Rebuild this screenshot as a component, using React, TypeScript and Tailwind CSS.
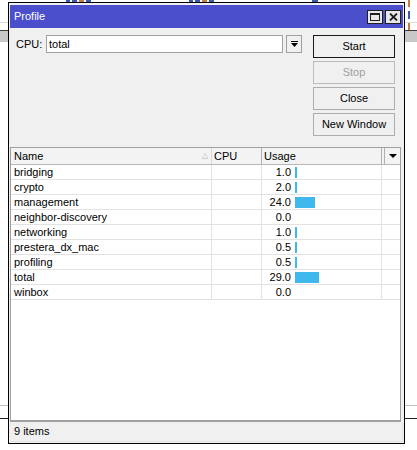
import React from "react";

const rows: { name: string; usage: number }[] = [
  { name: "bridging", usage: 1.0 },
  { name: "crypto", usage: 2.0 },
  { name: "management", usage: 24.0 },
  { name: "neighbor-discovery", usage: 0.0 },
  { name: "networking", usage: 1.0 },
  { name: "prestera_dx_mac", usage: 0.5 },
  { name: "profiling", usage: 0.5 },
  { name: "total", usage: 29.0 },
  { name: "winbox", usage: 0.0 },
];

const font = { fontFamily: '"Liberation Sans", Arial, sans-serif' };

function Btn({ label, primary, disabled }: { label: string; primary?: boolean; disabled?: boolean }) {
  return (
    <div
      className={
        "h-[23px] w-[82px] flex items-center justify-center text-[11px] bg-[#f0f0f0] border " +
        (primary ? "border-[#1a1a1a] text-black" : disabled ? "border-[#bcbcbc] text-[#a0a0a0]" : "border-[#adadad] text-black")
      }
    >
      {label}
    </div>
  );
}

function Frag() {
  return (
    <div className="flex gap-[2px]">
      <div className="w-[4px] h-[2px] bg-[#3a5ab0]" />
      <div className="w-[5px] h-[2px] bg-[#3a5ab0]" />
      <div className="w-[5px] h-[2px] bg-[#c08040]" />
      <div className="w-[5px] h-[2px] bg-[#3a5ab0]" />
    </div>
  );
}

export default function App() {
  return (
    <div className="relative w-[417px] h-[450px] bg-white overflow-hidden" style={font}>
      {/* background window behind */}
      <div className="absolute left-[66px] top-0 flex gap-[98px]">
        <Frag />
        <Frag />
        <div className="w-[6px] h-[2px] bg-[#3a5ab0]" />
      </div>
      <div className="absolute left-[407px] top-0 flex flex-col gap-[4px]">
        <div className="w-[3px] h-[7px] border-r-2 border-[#c08040]" />
        <div className="w-[3px] h-[8px] border-r-2 border-[#3a5ab0]" />
        <div className="w-[3px] h-[8px] border-r-2 border-[#c08040]" />
      </div>
      <div className="absolute left-0 top-[22px] w-full h-px bg-[#dcdcdc]" />
      <div className="absolute left-0 top-[30px] w-full h-[12px] bg-[#c8c8c8] border-t border-[#3c3c3c]" />
      <div className="absolute left-0 top-[405px] w-full h-px bg-[#c0c0c0]" />
      <div className="absolute left-0 top-[418px] w-full h-px bg-[#202020]" />

      {/* Profile window */}
      <div className="absolute left-[8px] top-[2px] w-[397px] h-[442px] border border-black bg-[#f0f0f0] p-px flex flex-col">
        {/* title bar */}
        <div className="mt-px h-[23px] bg-[#4b4fcb] flex items-center pl-[4px] pr-[2px]">
          <span className="text-white text-[11px] flex-1">Profile</span>
          <div className="flex gap-[2px]">
            <div className="w-[16px] h-[14px] bg-[#e8e8e8] border border-[#202020] flex items-center justify-center">
              <div className="w-[10px] h-[8px] border border-[#202020] border-t-2" />
            </div>
            <div className="w-[16px] h-[14px] bg-[#e8e8e8] border border-[#202020] flex items-center justify-center">
              <svg width="9" height="8" viewBox="0 0 9 8">
                <path d="M1 0.5 L8 7.5 M8 0.5 L1 7.5" stroke="#202020" strokeWidth="1.8" />
              </svg>
            </div>
          </div>
        </div>

        {/* top section */}
        <div className="flex pt-[7px] pr-[8px]">
          <div className="flex-1 flex items-start pl-[6px]">
            <span className="text-[11px] text-black h-[18px] leading-[18px] w-[30px]">CPU:</span>
            <div className="w-[237px] h-[18px] bg-white border border-[#a0a0a0] text-[11px] text-black leading-[16px] pl-[2px]">
              total
            </div>
            <div className="ml-[3px] w-[16px] h-[18px] bg-[#f0f0f0] border border-[#a0a0a0] flex items-center justify-center">
              <svg width="7" height="7" viewBox="0 0 7 7">
                <rect x="0" y="0" width="7" height="1" fill="#000" />
                <path d="M0 2 L7 2 L3.5 6 Z" fill="#000" />
              </svg>
            </div>
          </div>
          <div className="flex flex-col gap-[3px]">
            <Btn label="Start" primary />
            <Btn label="Stop" disabled />
            <Btn label="Close" />
            <Btn label="New Window" />
          </div>
        </div>

        {/* table */}
        <div className="mt-[11px] mr-[2px] flex-1 bg-white border border-[#a0a0a0] border-b-2 flex flex-col overflow-hidden">
          <div className="flex h-[17px] bg-[#f3f3f3] border-b border-[#b8b8b8] text-[11px] text-black leading-[16px]">
            <div className="w-[201px] pl-[3px] relative border-r border-[#d8d8d8]">
              Name
              <span className="absolute right-[3px] top-[0px] text-[8px] text-[#b8b8b8]">△</span>
            </div>
            <div className="w-[50px] pl-[2px] border-r border-[#b0b0b0]">CPU</div>
            <div className="w-[120px] pl-[2px] border-r border-[#b0b0b0]">Usage</div>
            <div className="w-[3px] border-r border-[#b0b0b0]" />
            <div className="flex-1 flex items-center justify-center">
              <svg width="8" height="4" viewBox="0 0 8 4">
                <path d="M0 0 L8 0 L4 4 Z" fill="#000" />
              </svg>
            </div>
          </div>
          {rows.map((r) => (
            <div key={r.name} className="flex h-[15px] border-b border-[#e2e2e2] text-[11px] text-black leading-[14px]">
              <div className="w-[201px] pl-[3px] border-r border-[#e2e2e2]">{r.name}</div>
              <div className="w-[50px] border-r border-[#e2e2e2]" />
              <div className="w-[120px] flex items-center border-r border-[#e2e2e2]">
                <span className="w-[29px] text-right">{r.usage.toFixed(1)}</span>
                {r.usage > 0 && (
                  <div
                    className="ml-[4px] h-[11px] bg-[#3fb8ed]"
                    style={{ width: Math.max(2, Math.round(r.usage * 0.82)) }}
                  />
                )}
              </div>
              <div className="flex-1" />
            </div>
          ))}
        </div>

        {/* status bar */}
        <div className="h-[20px] flex items-center pl-[4px] text-[11px] text-black bg-[#f0f0f0] border-b border-r border-[#e4e4e4]">
          9 items
        </div>
      </div>
    </div>
  );
}
